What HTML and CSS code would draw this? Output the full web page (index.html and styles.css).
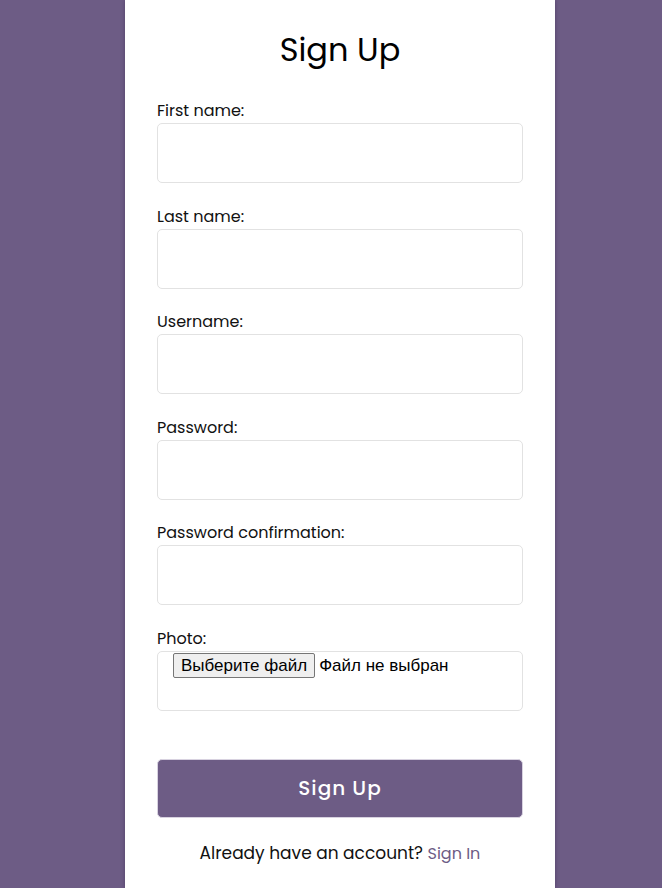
FILE: index.html
```html
<!DOCTYPE html>
<html lang="ru">
<head>
<meta charset="utf-8">
<title>Sign Up</title>
<link rel="stylesheet" href="styles.css">
</head>
<body>
<main class="card">
  <h1 class="title">Sign Up</h1>
  <form class="form">
    <div class="field">
      <label class="label">First name:</label>
      <div class="input"></div>
    </div>
    <div class="field">
      <label class="label">Last name:</label>
      <div class="input"></div>
    </div>
    <div class="field">
      <label class="label">Username:</label>
      <div class="input"></div>
    </div>
    <div class="field">
      <label class="label">Password:</label>
      <div class="input"></div>
    </div>
    <div class="field">
      <label class="label">Password confirmation:</label>
      <div class="input"></div>
    </div>
    <div class="field">
      <label class="label">Photo:</label>
      <div class="input file">
        <span class="file-btn">Выберите файл</span>
        <span class="file-name">Файл не выбран</span>
      </div>
    </div>
    <div class="submit">Sign Up</div>
  </form>
  <p class="footer">Already have an account? <a class="link">Sign In</a></p>
</main>
</body>
</html>
```

FILE: styles.css
```css
html, body {
  margin: 0;
  padding: 0;
}
body {
  background: #6d5c85;
  font-family: "Poppins", "Noto Sans", "Open Sans", sans-serif;
  color: #111;
  min-height: 888px;
}
.card {
  width: 430px;
  box-sizing: border-box;
  margin: 0 107px 0 125px;
  background: #fff;
  min-height: 888px;
  padding: 28px 32px 0;
  box-shadow: 0 0 4px rgba(40, 20, 60, 0.4);
}
.title {
  margin: 0 0 26px;
  text-align: center;
  font-size: 32px;
  font-weight: 400;
  line-height: 44px;
  color: #000;
}
.form {
  display: flex;
  flex-direction: column;
}
.field {
  display: flex;
  flex-direction: column;
  margin-bottom: 20.6px;
}
.label {
  font-size: 16px;
  line-height: 24px;
  margin-top: 1px;
}
.input {
  height: 60px;
  box-sizing: border-box;
  border: 1px solid #e2e2e2;
  border-radius: 5px;
}
.file {
  display: flex;
  align-items: flex-start;
  padding: 1px 15px 0;
  font-family: "Liberation Sans", Arial, sans-serif;
  font-size: 17px;
  color: #000;
}
.file-btn {
  border: 1px solid #767676;
  border-radius: 2px;
  background: #efefef;
  padding: 1px 7px;
  line-height: 21px;
  margin-right: 4px;
}
.file-name {
  line-height: 25px;
}
.submit {
  margin-top: 27px;
  height: 59px;
  box-sizing: border-box;
  border-radius: 5px;
  border: 1px solid #d8d2e0;
  background: #6d5c85;
  color: #fff;
  font-size: 20px;
  font-weight: 500;
  letter-spacing: 1px;
  display: flex;
  align-items: center;
  justify-content: center;
}
.footer {
  margin: 23px 0 0;
  text-align: center;
  font-size: 17px;
  line-height: 24px;
}
.link {
  color: #6d5c85;
  font-size: 16px;
}
```
